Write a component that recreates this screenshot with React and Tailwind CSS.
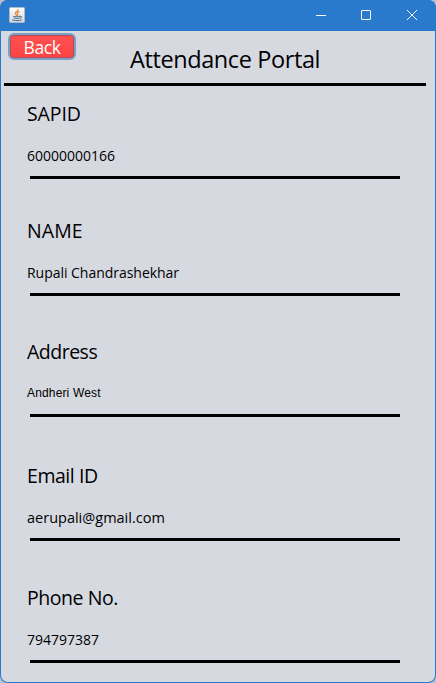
const fields = [
  { label: 'SAPID', value: '60000000166', gap: 'mt-[13px]', labelStyle: 'text-[19.5px] tracking-[-0.1px]', valueStyle: 'text-[14px]' },
  { label: 'NAME', value: 'Rupali Chandrashekhar', gap: 'mt-[37px]', labelStyle: 'text-[19.5px] tracking-[0.1px]', valueStyle: 'text-[14px] tracking-[-0.03px]' },
  { label: 'Address', value: 'Andheri West', gap: 'mt-[41px]', labelStyle: 'text-[19.5px] tracking-[-0.5px]', small: true },
  { label: 'Email ID', value: 'aerupali@gmail.com', gap: 'mt-[44px]', labelStyle: 'text-[19.5px] tracking-[-0.45px]', valueStyle: 'text-[14.5px]' },
  { label: 'Phone No.', value: '794797387', gap: 'mt-[42px]', labelStyle: 'text-[19.5px] tracking-[-0.45px]', valueStyle: 'text-[14px]' },
];

function JavaIcon() {
  return (
    <svg width="16" height="16" viewBox="0 0 16 16" fill="none">
      <defs>
        <linearGradient id="tile" x1="0" y1="0" x2="0" y2="1">
          <stop offset="0" stopColor="#ffffff" />
          <stop offset="1" stopColor="#d5d8dc" />
        </linearGradient>
      </defs>
      <rect x="0.5" y="0.5" width="15" height="15" rx="0.8" fill="url(#tile)" stroke="#b4bcc4" strokeWidth="0.8" />
      <path d="M9.100 2.400C9.600 4.200 6 4.800 6.300 6.400c.2.800.900 1.200 1.200 2M10.200 4.600c-1.800.7-2.400 1.500-1.600 2.300.4.600.2 1.200-.2 1.700" stroke="#e5843a" strokeWidth="1.200" strokeLinecap="round" />
      <path d="M4.400 9.400c1.500.5 4.500.5 6.200 0M5.200 11.100c1.500.5 3.700.5 5 0M3.600 13c2.500.8 6.400.8 8.800 0M11 9.200c2.200-.6 2.400 1.600.2 2.200" stroke="#456a84" strokeWidth="1" strokeLinecap="round" />
    </svg>
  );
}

function TitleBar() {
  return (
    <header className="flex h-[31px] shrink-0 items-start justify-between bg-[#2979cc] pr-[18px] pl-[9px]">
      <div className="pt-[7px]">
        <JavaIcon />
      </div>
      <svg className="mt-[9px]" width="102" height="12" viewBox="0 0 102 12" fill="none" stroke="#fff">
        <path d="M0 6.500h10" />
        <rect x="45.500" y="1.500" width="9" height="9" rx="0.5" />
        <path d="M91 1l10 10M101 1L91 11" />
      </svg>
    </header>
  );
}

function Field({ label, value, gap, labelStyle, valueStyle, small }) {
  return (
    <section className={`flex h-20 flex-col ${gap}`}>
      <div className={`h-7 pt-px pl-[26px] leading-7 whitespace-nowrap ${labelStyle}`}>{label}</div>
      {small ? (
        <div className="mt-[18px] h-5 pt-px pl-[26px] font-['Liberation_Sans',sans-serif] text-[12px] leading-[18px] tracking-[0.15px]">
          {value}
        </div>
      ) : (
        <div className={`mt-[18px] h-5 pt-px pl-[26px] leading-5 whitespace-nowrap ${valueStyle}`}>
          {value}
        </div>
      )}
      <div className="mt-[11px] ml-[29px] h-[3px] w-[370px] bg-black" />
    </section>
  );
}

export default function App() {
  return (
    <div className="h-[683px] w-[436px] bg-[#b5c0cc] font-['Open_Sans',sans-serif] text-black">
      <div className="flex h-full flex-col overflow-hidden rounded-lg bg-[#2979cc]">
        <TitleBar />
        <main className="mx-px mb-px flex flex-1 flex-col rounded-b-[7px] bg-[#d6d9e0]">
          <div className="flex h-[52px] items-start pt-[2px] pl-[7px]">
            <button className="flex h-[27px] w-[68px] shrink-0 items-center justify-center rounded-md border-2 border-[#7aa0c2] bg-linear-to-b from-[#ff5050] to-[#fd4444] pt-px text-[17.5px] leading-6 tracking-[-0.4px] text-white shadow-[inset_0_0_0_1px_#b84a5c]">
              Back
            </button>
            <h1 className="ml-[54px] pt-[10px] text-[23.5px] leading-[33px] font-normal tracking-[-0.4px] whitespace-nowrap">
              Attendance Portal
            </h1>
          </div>
          <div className="ml-[3px] h-[3px] w-[422px] bg-black" />
          {fields.map((f) => (
            <Field key={f.label} {...f} />
          ))}
        </main>
      </div>
    </div>
  );
}
